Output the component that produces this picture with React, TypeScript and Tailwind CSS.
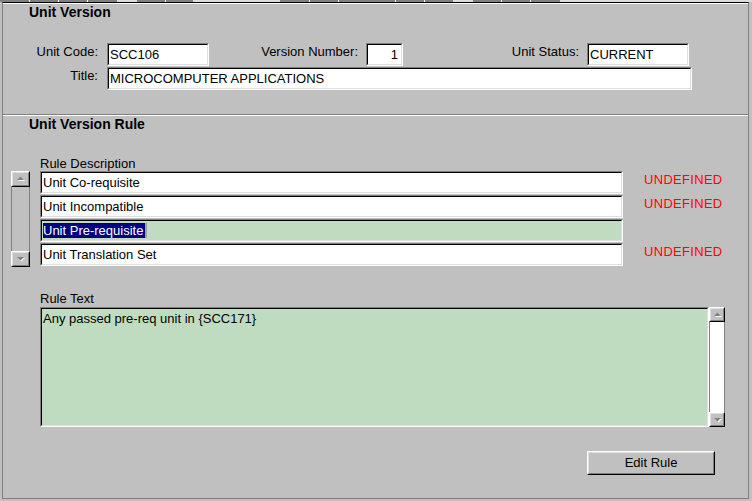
import React from "react";

function Sunken({
  outer,
  inner,
  children,
}: {
  outer: string;
  inner: string;
  children?: React.ReactNode;
}) {
  return (
    <div className={"border border-t-[#808080] border-l-[#808080] border-b-white border-r-white " + outer}>
      <div className={"h-full border border-t-black border-l-black border-b-[#dfdfdf] border-r-[#dfdfdf] " + inner}>
        {children}
      </div>
    </div>
  );
}

function Raised({ outer, inner, children }: { outer: string; inner: string; children?: React.ReactNode }) {
  return (
    <div className={"border border-t-white border-l-white border-b-black border-r-black bg-[#c0c0c0] " + outer}>
      <div className={"h-full border border-t-[#dfdfdf] border-l-[#dfdfdf] border-b-[#808080] border-r-[#808080] " + inner}>
        {children}
      </div>
    </div>
  );
}

function Tri({ down }: { down?: boolean }) {
  return (
    <svg width="9" height="6" viewBox="0 0 9 6">
      {down ? (
        <>
          <polygon points="2,2 9,2 5.5,5.5" fill="#ffffff" />
          <polygon points="1,1 8,1 4.5,4.5" fill="#808080" />
        </>
      ) : (
        <>
          <polygon points="2,5 9,5 5.5,1.5" fill="#ffffff" />
          <polygon points="1,4 8,4 4.5,0.5" fill="#808080" />
        </>
      )}
    </svg>
  );
}

function ScrollBtn({ down, h }: { down?: boolean; h: string }) {
  return (
    <Raised outer={h} inner="flex items-center justify-center">
      <Tri down={down} />
    </Raised>
  );
}

const segs: { w: number; c: string }[] = [
  { w: 29, c: "d" }, { w: 1, c: "w" }, { w: 28, c: "d" }, { w: 1, c: "w" }, { w: 28, c: "d" }, { w: 1, c: "w" }, { w: 29, c: "d" },
  { w: 20, c: "l" },
  { w: 28, c: "d" }, { w: 1, c: "w" }, { w: 27, c: "d" },
  { w: 87, c: "l" },
  { w: 29, c: "d" }, { w: 1, c: "w" }, { w: 28, c: "d" }, { w: 1, c: "w" }, { w: 56, c: "d" }, { w: 1, c: "w" }, { w: 28, c: "d" }, { w: 1, c: "w" }, { w: 28, c: "d" },
  { w: 20, c: "l" },
  { w: 28, c: "d" }, { w: 1, c: "w" }, { w: 28, c: "d" }, { w: 1, c: "w" }, { w: 29, c: "d" },
  { w: 192, c: "l" },
];

function Strip() {
  return (
    <div className="flex h-[2px] w-[752px] overflow-hidden">
      {segs.map((s, i) => (
        <div
          key={i}
          className={
            "h-full shrink-0 " +
            (s.c === "d" ? "bg-[#808080]" : s.c === "w" ? "bg-white" : "bg-[#dcdcdc]")
          }
          style={{ width: s.w }}
        />
      ))}
    </div>
  );
}

const rows = [
  { t: "Unit Co-requisite", u: true },
  { t: "Unit Incompatible", u: true },
  { t: "Unit Pre-requisite", u: false, sel: true },
  { t: "Unit Translation Set", u: true },
];

export default function App() {
  return (
    <div className="w-[752px] h-[501px] bg-[#c0c0c0] flex flex-col overflow-hidden text-[13px] leading-[16px] text-black font-['Liberation_Sans',Arial,sans-serif]">
      <Strip />
      <div className="ml-[2px] w-[747px] h-[497px] border border-t-black border-l-[#808080] border-r-[#808080] border-b-[#808080] flex flex-col">
        <div className="h-[1px] bg-white" />
        {/* Panel 1 */}
        <div className="h-[110px] flex flex-col">
          <div className="h-[16px] ml-[26px] font-bold text-[14px]">Unit Version</div>
          <div className="mt-[23px] flex items-start h-[23px]">
            <div className="w-[95px] text-right pt-[1px]">Unit Code:</div>
            <Sunken outer="ml-[9px] w-[102px] h-[23px] bg-white" inner="flex items-center pl-[1px]">SCC106</Sunken>
            <div className="w-[149px] text-right pt-[1px]">Version Number:</div>
            <Sunken outer="ml-[8px] w-[37px] h-[23px] bg-white" inner="flex items-center justify-end pr-[3px]">1</Sunken>
            <div className="w-[176px] text-right pt-[1px]">Unit Status:</div>
            <Sunken outer="ml-[8px] w-[102px] h-[23px] bg-white" inner="flex items-center pl-[1px]">CURRENT</Sunken>
          </div>
          <div className="mt-[1px] flex items-start h-[23px]">
            <div className="w-[95px] text-right pt-[1px]">Title:</div>
            <Sunken outer="ml-[9px] w-[585px] h-[23px] bg-white" inner="flex items-center pl-[1px]">MICROCOMPUTER APPLICATIONS</Sunken>
          </div>
        </div>
        <div className="h-[2px] border-t border-t-[#808080] border-b border-b-white" />
        {/* Panel 2 */}
        <div className="flex flex-col">
          <div className="h-[16px] ml-[26px] font-bold text-[14px]">Unit Version Rule</div>
          <div className="mt-[24px] h-[15px] ml-[37px]">Rule Description</div>
          <div className="flex h-[96px]">
            <div className="ml-[8px] w-[19px] h-[96px] flex flex-col">
              <ScrollBtn h="h-[16px]" />
              <div className="flex-1 border-l border-l-[#808080] border-r border-r-[#808080]" />
              <ScrollBtn h="h-[16px]" down />
            </div>
            <div className="ml-[10px] w-[583px] flex flex-col gap-[1px]">
              {rows.map((r) => (
                <Sunken
                  key={r.t}
                  outer={"h-[23px] " + (r.sel ? "bg-[#c0dcc0]" : "bg-white")}
                  inner="flex items-center pl-[1px]"
                >
                  {r.sel ? (
                    <>
                      <span className="bg-[#000080] text-white leading-[15px] pr-[2px]">{r.t}</span>
                      <span className="w-[2px] h-[15px] bg-[#a0a0a0]" />
                    </>
                  ) : (
                    r.t
                  )}
                </Sunken>
              ))}
            </div>
            <div className="ml-[21px] flex flex-col gap-[1px]">
              {rows.map((r) => (
                <div key={r.t} className="h-[23px] pt-[1px] text-[#ff0000] tracking-[0.3px]">
                  {r.u ? "UNDEFINED" : ""}
                </div>
              ))}
            </div>
          </div>
          <div className="mt-[24px] h-[16px] ml-[37px]">Rule Text</div>
          <div className="flex h-[120px]">
            <Sunken outer="ml-[37px] w-[669px] h-[120px] bg-[#c0dcc0]" inner="pl-[1px] pt-[2px]">
              Any passed pre-req unit in {"{SCC171}"}
            </Sunken>
            <div className="w-[16px] h-[120px] flex flex-col">
              <ScrollBtn h="h-[15px]" />
              <div className="flex-1 bg-white border-l border-l-[#808080] border-r border-r-[#808080]" />
              <ScrollBtn h="h-[15px]" down />
            </div>
          </div>
          <div className="mt-[24px] flex">
            <Raised outer="ml-[584px] w-[128px] h-[24px]" inner="flex items-center justify-center">
              Edit Rule
            </Raised>
          </div>
        </div>
      </div>
    </div>
  );
}
